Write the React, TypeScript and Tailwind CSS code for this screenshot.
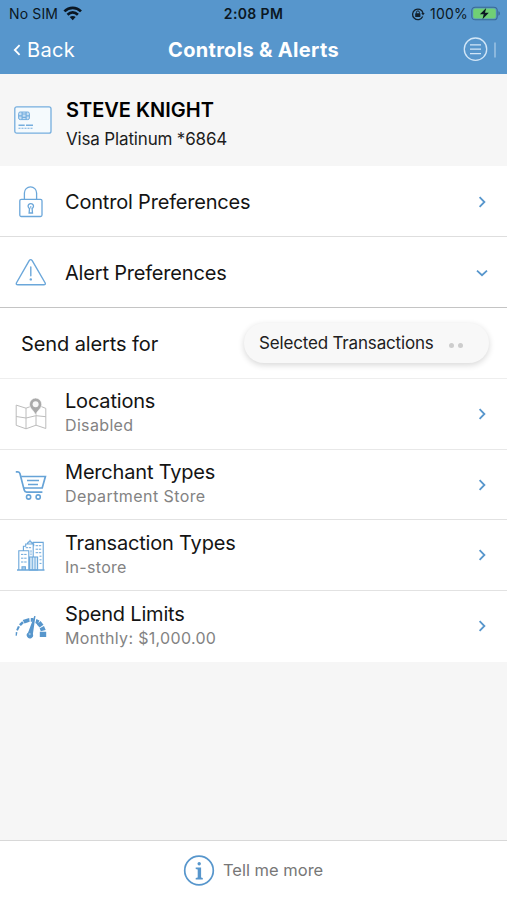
import type { ReactNode } from "react";

const BLUE = "#5796cc";

function WifiIcon() {
  return (
    <svg width="20" height="16" viewBox="0 0 20 16" fill="none" stroke="#0b1722" strokeWidth="2.7">
      <path d="M1.4 5.4C6.2 .7 13.2 .7 18 5.4" />
      <path d="M4.5 8.7C7.7 5.7 11.7 5.7 14.9 8.7" />
      <path d="M9.7 14.2 6.7 11C8.5 9.5 10.9 9.5 12.7 11Z" fill="#0b1722" stroke="none" />
    </svg>
  );
}

function RotationLockIcon() {
  return (
    <svg width="14" height="14" viewBox="0 0 14 14" fill="none" stroke="#12202c" strokeWidth="1.3">
      <path d="M11.7 9.6A5.3 5.3 0 1 1 12 6" />
      <path d="M10.3 6h3.4L12 8.6Z" fill="#12202c" stroke="none" />
      <rect x="4.2" y="6.2" width="5.2" height="3.7" rx="0.5" fill="#12202c" stroke="none" />
      <path d="M5.4 6.6V5.4a1.5 1.5 0 0 1 3 0v1.2" strokeWidth="1" />
    </svg>
  );
}

function BatteryIcon() {
  return (
    <svg width="30" height="16" viewBox="0 0 30 16">
      <rect x="0.8" y="1.2" width="25.4" height="12.6" rx="3.4" fill="none" stroke="#3b6a91" strokeWidth="1.1" />
      <rect x="2.2" y="2.6" width="22.6" height="9.8" rx="2" fill="#70cf75" />
      <path d="M27.4 5.3c2 .6 2 3.8 0 4.4Z" fill="#3b6a91" />
      <path d="M15.2 2 8.9 8.2h3.8l-1.2 5 6.3-6.4H14Z" fill="#0b1722" />
    </svg>
  );
}

function MenuIcon() {
  return (
    <svg width="34" height="26" viewBox="0 0 34 26" fill="none" stroke="#d2e6f7" strokeWidth="1.3">
      <circle cx="12.5" cy="12.2" r="11.2" />
      <path d="M7 7.8h11M7 12.2h11M7 16.6h11" />
      <path d="M32 5.5v15" stroke="#a9cbe8" />
    </svg>
  );
}

function CardIcon() {
  return (
    <svg width="38" height="28" viewBox="0 0 38 28" fill="none" stroke="#76aede">
      <rect x="0.8" y="0.8" width="36.2" height="26.4" rx="2" strokeWidth="1.3" fill="#f5fafd" />
      <rect x="4.6" y="6" width="10.8" height="7.6" rx="1.6" fill="#c9e0f4" />
      <path d="M4.6 9.8h3.5m4 0h3.3M8.1 6v7.6M12.1 6v7.6M8.1 8h4M8.1 11.4h4" strokeWidth="1.2" />
      <path d="M4.5 19.3h6.2M12 19.3h7" strokeWidth="1.5" />
      <path d="M4.5 22.3h15" strokeDasharray="2 1" strokeWidth="1.1" />
    </svg>
  );
}

function LockIcon() {
  return (
    <svg width="32" height="32" viewBox="0 0 32 32" fill="none" stroke="#6ba7da" strokeWidth="1.3">
      <rect x="4.8" y="13.3" width="22.2" height="17.2" rx="1.5" />
      <path d="M9.4 13.3V6.9a6.1 6.1 0 0 1 12.2 0v6.4" />
      <path d="M14.5 22.6a2.7 2.7 0 1 1 2.6 0l.4 4.4h-3.4Z" />
      <path d="M15.8 20v2.4" strokeWidth="1" />
    </svg>
  );
}

function WarningIcon() {
  return (
    <svg width="32" height="32" viewBox="0 0 32 32" fill="none" stroke="#6ba7da" strokeWidth="1.4" strokeLinejoin="round">
      <path d="M14.2 3.7q1.5-2.2 3 0L30.2 26q.6 1.8-1.4 1.8H2.8q-2 0-1.4-1.8Z" />
      <path d="M15.8 10v8.7" strokeLinecap="round" />
      <circle cx="15.8" cy="22.4" r="1.2" fill="#6ba7da" stroke="none" />
    </svg>
  );
}

function MapIcon() {
  return (
    <svg width="32" height="32" viewBox="0 0 32 32" fill="none" stroke="#bcbcbc" strokeWidth="1">
      <path d="M1.2 7.1 11 10.2l10-3.8 9.8 4v20.1L21 27.2l-10 3.6-9.8-3.5Z" />
      <path d="M11 10.2v20.6M21 15v12.2M1.2 18.5 11 20l10-2.3 9.8 1" />
      <path d="M20.6.1a6.1 6.1 0 0 0-6.1 6.1c0 4.5 4.5 6 6.1 11 1.6-5 6.1-6.5 6.1-11A6.1 6.1 0 0 0 20.6.1Z" fill="#aaa" stroke="#fff" strokeWidth=".6" />
      <circle cx="20.6" cy="6.3" r="3" fill="#f8f8f8" stroke="none" />
    </svg>
  );
}

function CartIcon() {
  return (
    <svg width="32" height="32" viewBox="0 0 32 32" fill="none" stroke="#66a3d7" strokeWidth="1.7">
      <path d="M.8 2.8h2.1c1.2 0 1.8.8 2.1 2l4.2 16.3c.4 1.4 1.1 2 2.4 2h15.8" />
      <path d="M6.2 7.5h24.2L27.2 19H9" />
      <path d="M12 11.5h12M13 15.4h10" strokeWidth="1.5" />
      <circle cx="13.6" cy="28" r="2.1" strokeWidth="1.6" />
      <circle cx="23.2" cy="28" r="2.1" strokeWidth="1.6" />
    </svg>
  );
}

function BuildingsIcon() {
  return (
    <svg width="32" height="32" viewBox="0 0 32 32" fill="none" stroke="#6ba7da" strokeWidth="1.1">
      <path d="M3.8 31V11.8h10V31M18.2 18V3.4h10V31M8.4 11.5V7.2h2.3V5h8v2.2M12.4 5c.6-3.2 4.4-3.2 5 0M15 2.5V.7" />
      <rect x="14.6" y="18" width="8" height="13" fill="#d7e9f7" />
      <path d="M17.3 18v13M20 18v13" strokeWidth=".9" />
      <path d="M6 15.4h6M6 19.2h6M6 23h6M20.6 6.7h5.6M20.6 10.2h5.6M20.6 13.7h5.6M24.5 17.2h2M24.5 20.8h2M24.5 24.4h2M10.7 8.7h5.4M16 11.2v5" strokeDasharray="2.4 .8" strokeWidth="1" />
      <path d="M7 31v-3.3h3.4V31" fill="#a6cbea" />
      <path d="M2 31h27.5" strokeWidth="1.5" />
    </svg>
  );
}

function GaugeIcon() {
  return (
    <svg width="32" height="32" viewBox="0 0 32 32" fill={BLUE}>
      <path d="M.6 25.8.8 22l1.6.3-.6 3.5ZM1.2 20l1.7-4.1 2 .9-2 3.9ZM4 14.2l3.1-3 1.8 1.8-3 2.9ZM7.7 9.9l6.5-1.8.5 3.6-5.2 1.7Z" />
      <path d="m15.8 8 2.6.1-.8 3.6h-1.9ZM21.4 8.9l3.1 1.5-2 4-2.2-1.3ZM25.5 11.1l3 3.7-3.9 2.7-2.8-3ZM29 16l1.7 3.9-4.9 1.4-1.1-3ZM24.8 21.7h6.4v5.2h-6.4Z" />
      <path d="m19.3 6 1.2.1-2.6 18a3.2 3.2 0 1 1-4.8-1.5Z" />
      <circle cx="14.7" cy="24.1" r="1.1" fill="#9cc5e6" />
    </svg>
  );
}

function InfoIcon() {
  return (
    <svg width="32" height="32" viewBox="0 0 32 32" fill="none" stroke={BLUE} strokeWidth="1.7">
      <circle cx="16" cy="15.5" r="14.3" />
      <circle cx="16.2" cy="8.7" r="1.7" fill={BLUE} stroke="none" />
      <path d="M12.7 12.4h5.4v10.2l1.7.5v1.5h-7.1v-1.5l2-.5v-8.2l-2-.5Z" fill={BLUE} stroke="none" />
    </svg>
  );
}

function Chevron({ down = false }: { down?: boolean }) {
  return (
    <svg className="mr-[18px] shrink-0" width="14" height="14" viewBox="0 0 14 14" fill="none" stroke={BLUE} strokeWidth="1.8">
      <path d={down ? "M2 4.6 7 9.2l5-4.6" : "M4.6 2.2 9.4 7l-4.8 4.8"} />
    </svg>
  );
}

interface RowProps {
  icon: ReactNode;
  title: string;
  detail?: string;
  open?: boolean;
  textClass?: string;
  detailClass?: string;
  rowClass: string;
}

function Row({ icon, title, detail, open, textClass = "", detailClass = "", rowClass }: RowProps) {
  return (
    <button className={`flex w-full items-center border-b bg-white text-left ${rowClass}`}>
      <span className="ml-[15px] w-[50px] shrink-0">{icon}</span>
      <span className={`flex flex-1 flex-col ${textClass}`}>
        <span className="text-[20px] leading-6 tracking-[-0.19px] text-[#141414]">{title}</span>
        {detail && <span className={`text-[16px] leading-6 text-[#838383] ${detailClass}`}>{detail}</span>}
      </span>
      <Chevron down={open} />
    </button>
  );
}

export default function App() {
  return (
    <div className="flex h-[900px] w-[507px] flex-col overflow-hidden whitespace-nowrap bg-[#f6f6f6] font-['Inter',sans-serif]">
      <header className="h-[74px] shrink-0 bg-[#5796cc]">
        <div className="grid h-[27px] grid-cols-3 items-center text-[14px] text-[#0b1722]">
          <div className="flex items-center gap-[5px] pl-[9px]">
            <span className="tracking-[0.15px]">No SIM</span>
            <WifiIcon />
          </div>
          <span className="text-center font-semibold tracking-[0.35px]">2:08 PM</span>
          <div className="flex items-center justify-end pr-[6px]">
            <RotationLockIcon />
            <span className="mr-[3px] ml-[5px] tracking-[0.2px]">100%</span>
            <BatteryIcon />
          </div>
        </div>
        <div className="grid h-[46px] grid-cols-[120px_1fr_120px] items-center text-[20px] text-white">
          <button className="flex items-center gap-[6px] pl-[13px]">
            <svg width="8" height="12" viewBox="0 0 8 12" fill="none" stroke="white" strokeWidth="1.8">
              <path d="M6.6 1.2 1.8 6l4.8 4.8" />
            </svg>
            <span className="tracking-[0.3px]">Back</span>
          </button>
          <h1 className="text-center font-bold tracking-[0.32px]">Controls &amp; Alerts</h1>
          <button className="flex justify-end pr-[10px]"><MenuIcon /></button>
        </div>
      </header>

      <section className="flex h-[92px] shrink-0 pt-6">
        <div className="mt-2 ml-[14px] w-[52px]"><CardIcon /></div>
        <div>
          <h2 className="text-[20px] leading-6 font-semibold text-black">STEVE KNIGHT</h2>
          <p className="mt-[5px] text-[17px] leading-6 tracking-[-0.16px] text-[#1c1c1c]">Visa Platinum *6864</p>
        </div>
      </section>

      <main className="shrink-0">
        <Row icon={<LockIcon />} title="Control Preferences" rowClass="h-[71px] border-[#dedede] pt-[2px]" />
        <Row icon={<WarningIcon />} title="Alert Preferences" open rowClass="h-[71px] border-[#c4c4c4] pt-[2px]" />
        <div className="flex h-[71px] items-center justify-between border-b border-[#eee] bg-white pr-[18px] pl-[21px]">
          <span className="pt-[2px] text-[20px] tracking-[-0.1px] text-[#141414]">Send alerts for</span>
          <button className="flex h-10 w-[245px] items-center rounded-full bg-[#f8f8f8] pl-[15px] shadow-[0_2px_6px_rgba(0,0,0,0.16)]">
            <span className="pt-[2px] text-[17px] tracking-[-0.17px] text-[#202020]">Selected Transactions</span>
            <span className="mt-1 ml-[15px] flex gap-1">
              <i className="size-[5px] rounded-full bg-[#cdcdcd]" />
              <i className="size-[5px] rounded-full bg-[#cdcdcd]" />
            </span>
          </button>
        </div>
        <Row icon={<MapIcon />} title="Locations" detail="Disabled" textClass="pb-[2px]" detailClass="tracking-[0.35px]" rowClass="h-[71px] border-[#e8e8e8]" />
        <Row icon={<CartIcon />} title="Merchant Types" detail="Department Store" textClass="pb-[2px]" detailClass="tracking-[0.42px]" rowClass="h-[70px] border-[#e2e2e2]" />
        <Row icon={<BuildingsIcon />} title="Transaction Types" detail="In-store" detailClass="tracking-[0.3px]" rowClass="h-[71px] border-[#e2e2e2]" />
        <Row icon={<GaugeIcon />} title="Spend Limits" detail="Monthly: $1,000.00" detailClass="tracking-[0.32px]" rowClass="h-[71px] border-white" />
      </main>

      <footer className="mt-auto flex h-[60px] shrink-0 items-center border-t border-[#d8d8d8] bg-white pl-[183px]">
        <InfoIcon />
        <span className="ml-2 text-[16.5px] text-[#777]">Tell me more</span>
      </footer>
    </div>
  );
}
